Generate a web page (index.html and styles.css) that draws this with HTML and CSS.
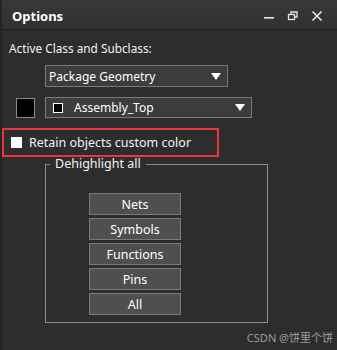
FILE: index.html
```html
<!DOCTYPE html>
<html lang="en">
<head>
    <meta charset="UTF-8">
    <title>Options</title>
    <link rel="stylesheet" href="styles.css">
</head>
<body>

<div class="panel">
    <!-- Barra de título -->
    <div class="titlebar">
        <span class="title">Options</span>
        <div class="win-buttons">
            <svg width="12" height="12" viewBox="0 0 12 12"><rect x="1" y="7" width="10" height="1.6" fill="#e6e6e6"/></svg>
            <svg width="12" height="12" viewBox="0 0 12 12" fill="none" stroke="#e6e6e6" stroke-width="1.3">
                <rect x="1.5" y="4.5" width="6" height="5"/>
                <path d="M4 4.5V2h6v5H7.5"/>
            </svg>
            <svg width="12" height="12" viewBox="0 0 12 12" stroke="#e6e6e6" stroke-width="1.6"><path d="M1.5 1.5l9 9M10.5 1.5l-9 9"/></svg>
        </div>
    </div>

    <div class="content">
        <div class="label">Active Class and Subclass:</div>

        <div class="select class-select">
            <span>Package Geometry</span>
            <span class="arrow"></span>
        </div>

        <div class="row">
            <div class="swatch"></div>
            <div class="select subclass-select">
                <span class="mini-box"></span>
                <span>Assembly_Top</span>
                <span class="arrow"></span>
            </div>
        </div>

        <label class="retain">
            <span class="check"></span>
            <span>Retain objects custom color</span>
        </label>

        <fieldset class="group">
            <legend>Dehighlight all</legend>
            <div class="buttons">
                <button>Nets</button>
                <button>Symbols</button>
                <button>Functions</button>
                <button>Pins</button>
                <button>All</button>
            </div>
        </fieldset>
    </div>

    <div class="watermark">CSDN @饼里个饼</div>
</div>

</body>
</html>
```

FILE: styles.css
```css
body {
    margin: 0;
    background-color: #2d2d2d;
    font-family: "Noto Sans", "Noto Sans CJK SC", sans-serif;
    font-size: 12px;
    color: #f2f2f2;
}
.panel {
    position: relative;
    width: 335px;
    height: 350px;
    border-left: 2px solid #242424;
    overflow: hidden;
}
.titlebar {
    display: flex;
    align-items: center;
    justify-content: space-between;
    height: 29px;
    padding-left: 10px;
    padding-right: 14px;
    background: linear-gradient(#383838, #313131);
    border-bottom: 1px solid #222;
}
.title {
    font-weight: bold;
    font-size: 13px;
    color: #fff;
    margin-top: 2px;
}
.win-buttons {
    display: flex;
    gap: 12px;
    margin-top: 3px;
}
.content {
    padding-left: 7px;
}
.label {
    margin-top: 10px;
    line-height: 16px;
    height: 16px;
    font-size: 11.8px;
}
.select {
    display: flex;
    align-items: center;
    box-sizing: border-box;
    background-color: #3c3c3c;
    border: 1px solid #7a7a7a;
    padding-left: 3px;
    padding-right: 6px;
    color: #fff;
}
.select .arrow {
    margin-left: auto;
    width: 0;
    height: 0;
    border-left: 5px solid transparent;
    border-right: 5px solid transparent;
    border-top: 7px solid #fff;
}
.class-select {
    margin-top: 9px;
    margin-left: 36px;
    width: 183px;
    height: 22px;
}
.row {
    display: flex;
    align-items: center;
    margin-top: 10px;
    height: 21px;
}
.swatch {
    box-sizing: border-box;
    width: 19px;
    height: 20px;
    margin-left: 7px;
    margin-right: 10px;
    background-color: #000;
    border: 1px solid #8a8a8a;
    box-shadow: inset 0 0 0 1px #000;
}
.subclass-select {
    width: 207px;
    height: 21px;
    padding-left: 7px;
}
.mini-box {
    box-sizing: border-box;
    width: 10px;
    height: 10px;
    border: 1px solid #fff;
    background-color: #000;
    margin-right: 11px;
}
.retain {
    display: flex;
    align-items: center;
    box-sizing: border-box;
    width: 217px;
    height: 29px;
    margin-top: 10px;
    margin-left: -7px;
    border: 2px solid #e8383d;
    padding-left: 7px;
    font-size: 12.5px;
}
.check {
    width: 11px;
    height: 11px;
    background-color: #fff;
    margin-right: 7px;
}
.group {
    box-sizing: border-box;
    width: 223px;
    height: 166px;
    margin: 0 0 0 36px;
    padding: 0 4px;
    border: 1px solid #8c8c8c;
}
.group legend {
    padding: 0 5px;
    line-height: 14px;
    font-size: 12.5px;
}
.buttons {
    display: flex;
    flex-direction: column;
    gap: 3px;
    margin-top: 22px;
    margin-left: 39px;
}
button {
    box-sizing: border-box;
    width: 92px;
    height: 22px;
    padding: 0;
    background-color: #4f4f4f;
    border: 1px solid #7a7a7a;
    color: #fff;
    font-family: "Noto Sans", sans-serif;
    font-size: 12.5px;
}
.watermark {
    position: absolute;
    right: 4px;
    bottom: 5px;
    font-size: 11px;
    color: #9c9c9c;
}
```
